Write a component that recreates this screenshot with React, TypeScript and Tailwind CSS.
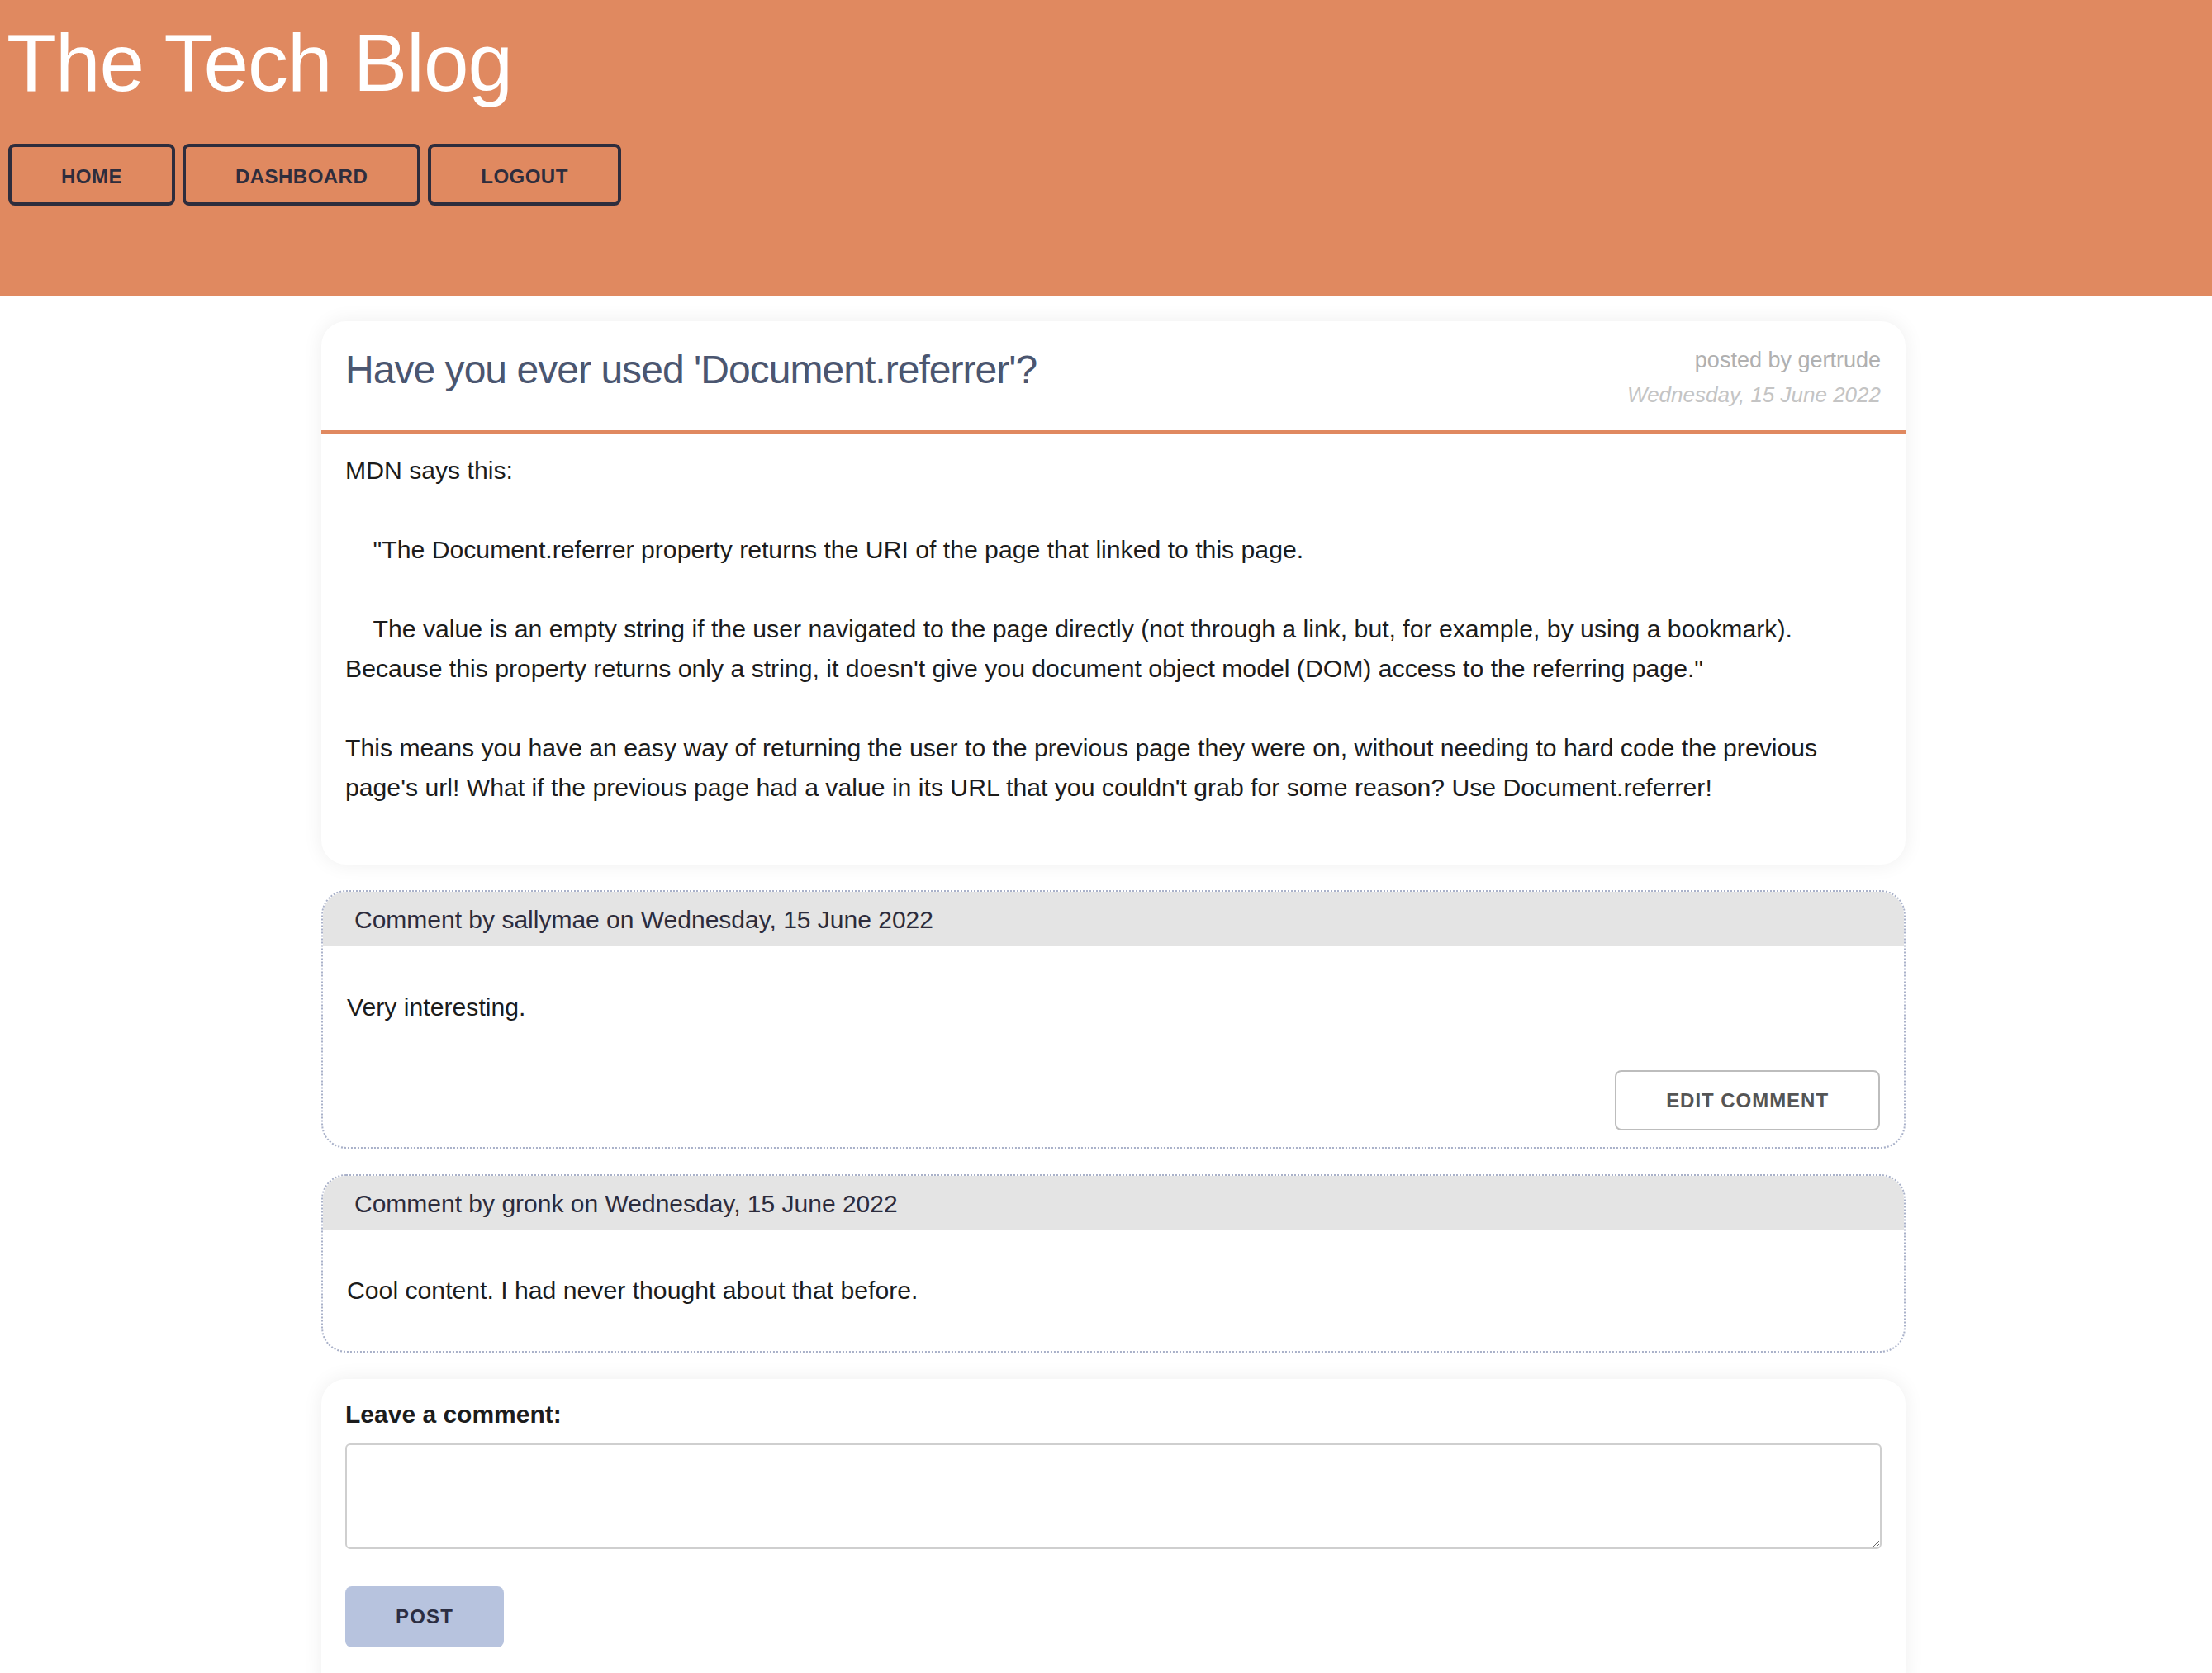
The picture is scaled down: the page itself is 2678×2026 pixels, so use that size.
const body = `MDN says this:

    "The Document.referrer property returns the URI of the page that linked to this page.

    The value is an empty string if the user navigated to the page directly (not through a link, but, for example, by using a bookmark). Because this property returns only a string, it doesn't give you document object model (DOM) access to the referring page."

This means you have an easy way of returning the user to the previous page they were on, without needing to hard code the previous page's url! What if the previous page had a value in its URL that you couldn't grab for some reason? Use Document.referrer!`;

const comments = [
  { user: "sallymae", date: "Wednesday, 15 June 2022", text: "Very interesting.", mine: true },
  { user: "gronk", date: "Wednesday, 15 June 2022", text: "Cool content. I had never thought about that before.", mine: false },
];

function NavButton({ label }: { label: string }) {
  return (
    <button className="flex h-[75px] items-center rounded-[8px] border-4 border-[#2e2d3d] px-[60px] pt-[5px] text-[24px] font-bold tracking-[0.02em] text-[#2e2d3d]">
      {label}
    </button>
  );
}

function Comment({ user, date, text, mine }: { user: string; date: string; text: string; mine: boolean }) {
  return (
    <div className="overflow-hidden rounded-[30px] border-2 border-dotted border-[#a9b1c9] bg-white">
      <div className="flex h-[66px] items-center bg-[#e4e4e4] pl-[38px] text-[30px] text-[#2d2c3c]">
        Comment by {user} on {date}
      </div>
      <div className={mine ? "px-[29px] pb-[20px] pt-[50px]" : "px-[29px] pb-[49px] pt-[49px]"}>
        <p className="text-[30.2px] leading-[48px] text-[#1c1c1c]">{text}</p>
        {mine && (
          <div className="mt-[52px] flex justify-end">
            <button className="flex h-[73px] items-center rounded-[8px] border-2 border-[#bdbdbd] px-[60px] text-[24px] font-bold tracking-[0.04em] text-[#555555]">
              EDIT COMMENT
            </button>
          </div>
        )}
      </div>
    </div>
  );
}

export default function App() {
  return (
    <div className="min-h-screen bg-white font-['Liberation_Sans',Arial,sans-serif]">
      <header className="h-[359px] bg-[#e08960]">
        <h1 className="pl-[8px] pt-[20px] text-[98px] leading-[1.15] tracking-[-0.01em] text-white">The Tech Blog</h1>
        <nav className="mt-[41px] flex gap-[9px] pl-[10px]">
          <NavButton label="HOME" />
          <NavButton label="DASHBOARD" />
          <NavButton label="LOGOUT" />
        </nav>
      </header>

      <main className="ml-[389px] flex w-[1918px] flex-col pb-[60px] pt-[30px]">
        <article className="rounded-[30px] bg-white shadow-[0_0_24px_rgba(0,0,0,0.07)]">
          <div className="flex items-start justify-between border-b-4 border-[#e08960] px-[29px] pb-[22px] pt-[26px]">
            <h2 className="mt-[4px] text-[48px] leading-[1.2] tracking-[-0.02em] text-[#4b5670]">
              Have you ever used 'Document.referrer'?
            </h2>
            <div className="pr-[1px] text-right">
              <p className="text-[27px] leading-[42px] text-[#b0b0b0]">posted by gertrude</p>
              <p className="text-[26px] italic leading-[42px] text-[#c4c4c4]">Wednesday, 15 June 2022</p>
            </div>
          </div>
          <p className="whitespace-pre-wrap px-[29px] pb-[69px] pt-[21px] text-[30.2px] leading-[48px] text-[#1c1c1c]">
            {body}
          </p>
        </article>

        <div className="mt-[31px] flex flex-col gap-[31px]">
          {comments.map((c) => (
            <Comment key={c.user} {...c} />
          ))}
        </div>

        <form className="mt-[32px] flex flex-col rounded-[30px] bg-white px-[29px] pb-[60px] pt-[19px] shadow-[0_0_24px_rgba(0,0,0,0.07)]">
          <label className="text-[30px] font-bold leading-[48px] text-[#1c1c1c]">Leave a comment:</label>
          <textarea className="mt-[11px] h-[128px] w-full rounded-[6px] border-2 border-[#cfcfcf] bg-white" />
          <div className="mt-[45px]">
            <button type="button" className="flex h-[74px] items-center rounded-[8px] bg-[#b7c3de] px-[61px] text-[24px] font-bold tracking-[0.05em] text-[#2b2d42]">
              POST
            </button>
          </div>
        </form>
      </main>
    </div>
  );
}
